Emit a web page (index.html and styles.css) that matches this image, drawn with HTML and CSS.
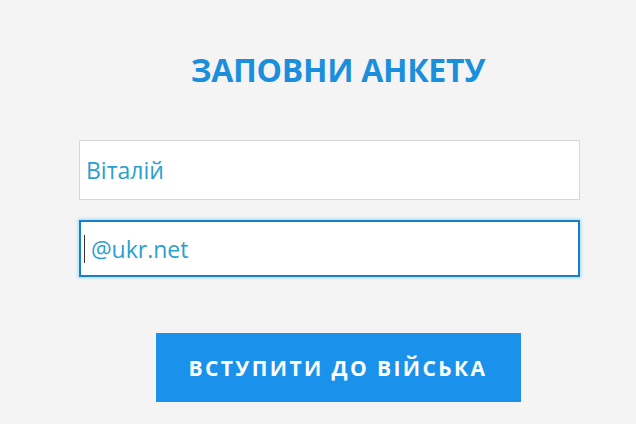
FILE: index.html
```html
<!DOCTYPE html>
<html lang="uk">
<head>
<meta charset="utf-8">
<link rel="stylesheet" href="styles.css">
</head>
<body>
<div class="form">
  <h1 class="title">ЗАПОВНИ АНКЕТУ</h1>
  <div class="field">Віталій</div>
  <div class="field field-focus"><span class="caret"></span>@ukr.net</div>
  <div class="actions">
    <button class="btn">ВСТУПИТИ ДО ВІЙСЬКА</button>
  </div>
</div>
</body>
</html>
```

FILE: styles.css
```css
html, body {
  margin: 0;
  padding: 0;
  background: #f4f4f4;
  width: 636px;
  height: 424px;
  overflow: hidden;
  font-family: "Open Sans", "Noto Sans", sans-serif;
}
.form {
  margin-left: 79px;
  width: 518px;
  padding-top: 48px;
}
.title {
  margin: 0 0 48px 0;
  text-align: center;
  font-size: 32px;
  line-height: 44px;
  font-weight: 700;
  letter-spacing: -0.3px;
  color: #1b8edc;
}
.field {
  box-sizing: border-box;
  width: 501px;
  height: 60px;
  background: #fff;
  border: 1px solid #d8d8d8;
  display: flex;
  align-items: center;
  padding-left: 6px;
  font-size: 23px;
  color: #2a9fcf;
  margin-bottom: 20px;
}
.field-focus {
  height: 57px;
  border: 2px solid #1a7fca;
  box-shadow: 0 0 3px 1px #9fdcf6;
  padding-left: 3px;
}
.caret {
  display: inline-block;
  width: 1px;
  height: 28px;
  background: #333;
  margin-right: 6px;
}
.actions {
  display: flex;
  justify-content: center;
  padding-top: 36px;
}
.btn {
  width: 365px;
  height: 69px;
  border: 0;
  background: #1a92ec;
  color: #fff;
  font-family: "Open Sans", "Noto Sans", sans-serif;
  font-size: 21px;
  font-weight: 700;
  letter-spacing: 2.4px;
}
```
